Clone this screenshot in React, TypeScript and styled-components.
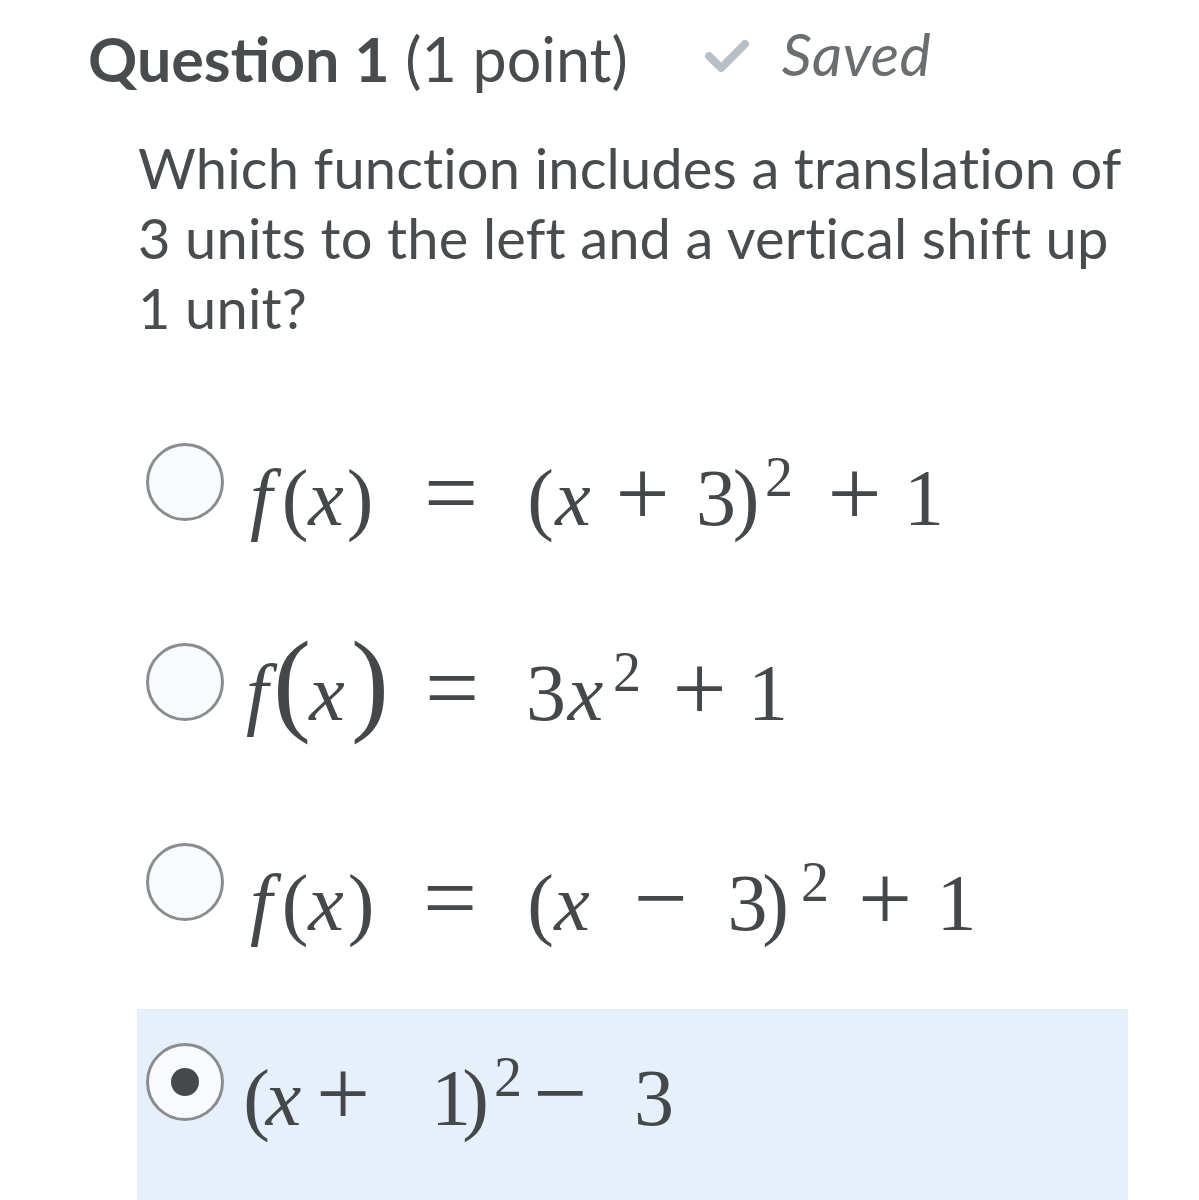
import React from "react";
import styled, { createGlobalStyle } from "styled-components";

const GlobalStyle = createGlobalStyle`
  html, body { margin: 0; padding: 0; background: #ffffff; }
  body { font-family: Lato, "Noto Sans", sans-serif; color: #494c4e; }
`;

const Page = styled.div`
  width: 1199px;
  height: 1200px;
  overflow: hidden;
  padding-top: 23px;
  box-sizing: border-box;
`;

const Header = styled.div`
  display: flex;
  align-items: baseline;
  padding-left: 88px;
  line-height: 72px;
`;

const Title = styled.h1`
  margin: 0;
  font-family: Lato, sans-serif;
  font-size: 61px;
  font-weight: 400;
  color: #494c4e;
`;

const TitleStrong = styled.span`
  font-weight: 700;
`;

const SavedBadge = styled.div`
  display: flex;
  align-items: baseline;
  margin-left: 76px;
  gap: 32px;
`;

const CheckIcon = styled.svg`
  width: 46px;
  height: 34px;
  align-self: center;
  transform: translateY(-4px);
`;

const SavedText = styled.span`
  font-family: Lato, sans-serif;
  font-style: italic;
  font-size: 59px;
  letter-spacing: 0.5px;
  color: #6b6e71;
  transform: translateY(-6px);
`;

const QuestionText = styled.p`
  margin: 37px 0 0 138px;
  font-family: Lato, sans-serif;
  font-size: 56px;
  letter-spacing: 0.15px;
  line-height: 70px;
  color: #494c4e;
  white-space: nowrap;
`;

const OptionList = styled.div`
  margin: 66px 0 0 137px;
  width: 991px;
  display: flex;
  flex-direction: column;
`;

const Option = styled.div<{ $selected?: boolean }>`
  height: 200px;
  box-sizing: border-box;
  padding: 34px 9px 0;
  display: flex;
  align-items: flex-start;
  background: ${(p) => (p.$selected ? "#e6f0fb" : "transparent")};
`;

const Radio = styled.span<{ $checked?: boolean }>`
  flex: none;
  width: 78px;
  height: 78px;
  box-sizing: border-box;
  border-radius: 50%;
  border: 3px solid #8a8d90;
  background: #f9fafc;
  display: flex;
  align-items: center;
  justify-content: center;
  &::after {
    content: "";
    display: ${(p) => (p.$checked ? "block" : "none")};
    width: 28px;
    height: 28px;
    border-radius: 50%;
    background: #46494c;
  }
`;

const MathLine = styled.div<{ $mt: number }>`
  margin-top: ${(p) => p.$mt}px;
  margin-left: 16px;
  font-family: "Liberation Serif", "DejaVu Serif", serif;
  font-size: 80px;
  line-height: 100px;
  height: 100px;
  white-space: nowrap;
  color: #45484b;
`;

const Token = styled.span<{
  $ml: number;
  $w: number;
  $size?: number;
  $raise?: number;
}>`
  display: inline-flex;
  justify-content: center;
  vertical-align: ${(p) => (p.$raise ? `${p.$raise}px` : "baseline")};
  margin-left: ${(p) => p.$ml}px;
  width: ${(p) => p.$w}px;
  line-height: 0;
  font-size: ${(p) => (p.$size ? `${p.$size}px` : "inherit")};
`;

const Glyph = styled.span<{ $italic?: boolean }>`
  flex: none;
  font-style: ${(p) => (p.$italic ? "italic" : "normal")};
`;

type Tok = {
  t: string;
  x0: number;
  x1: number;
  k?: "i" | "op" | "sup" | "big";
};

const ORIGIN = 240;

const SIZES: Record<string, number | undefined> = {
  op: 96,
  sup: 56,
  big: 114,
};

function Expression({ tokens, mt }: { tokens: Tok[]; mt: number }) {
  let prev = ORIGIN;
  return (
    <MathLine $mt={mt}>
      {tokens.map((tk, i) => {
        const ml = tk.x0 - prev;
        prev = tk.x1;
        return (
          <Token
            key={i}
            $ml={ml}
            $w={tk.x1 - tk.x0}
            $size={tk.k ? SIZES[tk.k] : undefined}
            $raise={tk.k === "sup" ? 29 : undefined}
          >
            <Glyph $italic={tk.k === "i"}>{tk.t}</Glyph>
          </Token>
        );
      })}
    </MathLine>
  );
}

const OPTIONS: { tokens: Tok[]; mt: number; selected?: boolean }[] = [
  {
    mt: 5,
    tokens: [
      { t: "f", x0: 246, x1: 276, k: "i" },
      { t: "(", x0: 284, x1: 306 },
      { t: "x", x0: 307, x1: 345, k: "i" },
      { t: ")", x0: 349, x1: 371 },
      { t: "=", x0: 426, x1: 476, k: "op" },
      { t: "(", x0: 529, x1: 552 },
      { t: "x", x0: 554, x1: 592, k: "i" },
      { t: "+", x0: 617, x1: 668, k: "op" },
      { t: "3", x0: 701, x1: 731 },
      { t: ")", x0: 735, x1: 757 },
      { t: "2", x0: 764, x1: 794, k: "sup" },
      { t: "+", x0: 829, x1: 880, k: "op" },
      { t: "1", x0: 910, x1: 938 },
    ],
  },
  {
    mt: 0,
    tokens: [
      { t: "f", x0: 244, x1: 270, k: "i" },
      { t: "(", x0: 279, x1: 305, k: "big" },
      { t: "x", x0: 307, x1: 347, k: "i" },
      { t: ")", x0: 354, x1: 386, k: "big" },
      { t: "=", x0: 428, x1: 476, k: "op" },
      { t: "3", x0: 531, x1: 561 },
      { t: "x", x0: 563, x1: 608, k: "i" },
      { t: "2", x0: 612, x1: 642, k: "sup" },
      { t: "+", x0: 675, x1: 724, k: "op" },
      { t: "1", x0: 754, x1: 782 },
    ],
  },
  {
    mt: 10,
    tokens: [
      { t: "f", x0: 246, x1: 276, k: "i" },
      { t: "(", x0: 284, x1: 306 },
      { t: "x", x0: 307, x1: 345, k: "i" },
      { t: ")", x0: 350, x1: 372 },
      { t: "=", x0: 426, x1: 474, k: "op" },
      { t: "(", x0: 529, x1: 552 },
      { t: "x", x0: 553, x1: 591, k: "i" },
      { t: "−", x0: 636, x1: 685, k: "op" },
      { t: "3", x0: 732, x1: 763 },
      { t: ")", x0: 765, x1: 786 },
      { t: "2", x0: 800, x1: 830, k: "sup" },
      { t: "+", x0: 860, x1: 910, k: "op" },
      { t: "1", x0: 943, x1: 970 },
    ],
  },
  {
    mt: 5,
    selected: true,
    tokens: [
      { t: "(", x0: 246, x1: 267 },
      { t: "x", x0: 266, x1: 301, k: "i" },
      { t: "+", x0: 320, x1: 366, k: "op" },
      { t: "1", x0: 438, x1: 464 },
      { t: ")", x0: 465, x1: 486 },
      { t: "2", x0: 494, x1: 522, k: "sup" },
      { t: "−", x0: 536, x1: 584, k: "op" },
      { t: "3", x0: 637, x1: 671 },
    ],
  },
];

export default function App() {
  return (
    <>
      <GlobalStyle />
      <Page>
        <Header>
          <Title>
            <TitleStrong>Question 1</TitleStrong> (1 point)
          </Title>
          <SavedBadge>
            <CheckIcon viewBox="0 0 46 34" aria-hidden="true">
              <path
                d="M5 17 L17 29 L41 5"
                fill="none"
                stroke="#b8bfc5"
                strokeWidth="8"
                strokeLinecap="round"
                strokeLinejoin="round"
              />
            </CheckIcon>
            <SavedText>Saved</SavedText>
          </SavedBadge>
        </Header>
        <QuestionText>
          Which function includes a translation of
          <br />3 units to the left and a vertical shift up
          <br />1 unit?
        </QuestionText>
        <OptionList>
          {OPTIONS.map((o, i) => (
            <Option key={i} $selected={o.selected}>
              <Radio $checked={o.selected} />
              <Expression tokens={o.tokens} mt={o.mt} />
            </Option>
          ))}
        </OptionList>
      </Page>
    </>
  );
}
